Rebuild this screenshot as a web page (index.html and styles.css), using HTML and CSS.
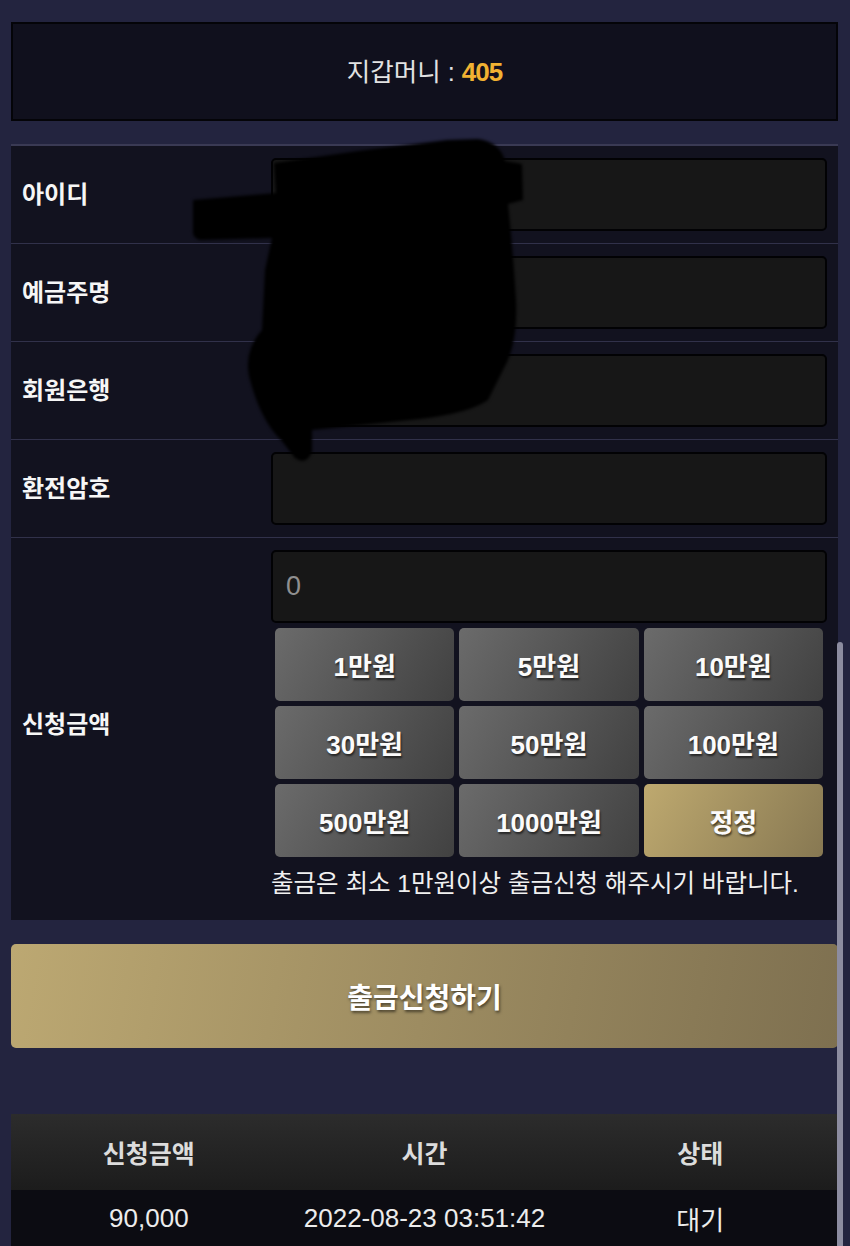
FILE: index.html
```html
<!DOCTYPE html>
<html lang="ko">
<head>
  <meta charset="UTF-8" />
  <title>출금신청</title>
  <link rel="stylesheet" href="styles.css">
</head>
<body>
  <div class="page">

    <div class="wallet">지갑머니 : <span class="wallet-amount">405</span></div>

    <div class="form">
      <div class="form-row">
        <div class="label">아이디</div>
        <div class="field"><input type="text" /></div>
      </div>
      <div class="form-row">
        <div class="label">예금주명</div>
        <div class="field"><input type="text" /></div>
      </div>
      <div class="form-row">
        <div class="label">회원은행</div>
        <div class="field"><input type="text" /></div>
      </div>
      <div class="form-row">
        <div class="label">환전암호</div>
        <div class="field"><input type="password" /></div>
      </div>
      <div class="form-row amount-row">
        <div class="label">신청금액</div>
        <div class="field">
          <input type="text" placeholder="0" />
          <div class="amount-grid">
            <button class="amount-btn">1만원</button>
            <button class="amount-btn">5만원</button>
            <button class="amount-btn">10만원</button>
            <button class="amount-btn">30만원</button>
            <button class="amount-btn">50만원</button>
            <button class="amount-btn">100만원</button>
            <button class="amount-btn">500만원</button>
            <button class="amount-btn">1000만원</button>
            <button class="amount-btn reset-btn">정정</button>
          </div>
          <p class="notice">출금은 최소 1만원이상 출금신청 해주시기 바랍니다.</p>
        </div>
      </div>
    </div>

    <button class="submit-btn">출금신청하기</button>

    <table class="history">
      <thead>
        <tr>
          <th>신청금액</th>
          <th>시간</th>
          <th>상태</th>
        </tr>
      </thead>
      <tbody>
        <tr>
          <td>90,000</td>
          <td>2022-08-23 03:51:42</td>
          <td>대기</td>
        </tr>
      </tbody>
    </table>

    <!-- masquage au feutre par-dessus les champs -->
    <svg class="redact" width="850" height="480" viewBox="0 0 850 480">
      <path d="M193,200 L276,193 L274,163 Q360,150 447,140 L478,139 Q500,142 505,161 L522,164 L523,200 L508,204 Q513,250 516,300 Q518,345 503,370 L488,400 Q470,413 420,419 L312,430 L312,452 Q306,466 295,458 L281,440 Q260,420 249,376 Q244,350 262,330 L265,270 L272,238 L200,240 Q192,238 193,230 Z" fill="#000" />
    </svg>
  </div>

  <div class="scroll-thumb"></div>
</body>
</html>
```

FILE: styles.css
```css
/* Page sombre bleu nuit */
html, body {
  margin: 0;
  background-color: #23243f;
}

body {
  font-family: "Liberation Sans", "Noto Sans CJK KR", sans-serif;
  color: #f2f2f2;
}

.page {
  position: relative;
  padding: 22px 12px 0 11px;
}

/* Bloc solde */
.wallet {
  height: 99px;
  box-sizing: border-box;
  border: 2px solid #040408;
  background-color: #10101d;
  display: flex;
  align-items: center;
  justify-content: center;
  font-size: 25.5px;
  line-height: 30px;
  color: #e2e2e2;
  white-space: pre;
}
.wallet-amount {
  color: #f1b232;
  font-weight: 700;
  font-size: 26px;
  letter-spacing: -1px;
}

/* Formulaire */
.form {
  margin-top: 23px;
  background-color: #12121f;
  border-top: 2px solid #3a3a54;
}

.form-row {
  display: grid;
  grid-template-columns: 260px 1fr;
  padding: 12px 11px 12px 0;
  border-bottom: 1px solid #31314a;
}
.form-row:last-child {
  border-bottom: none;
}

.label {
  align-self: center;
  padding-left: 11px;
  font-size: 24px;
  font-weight: 700;
  line-height: 30px;
  color: #f6f6f6;
}

.field input {
  display: block;
  width: 100%;
  height: 73px;
  box-sizing: border-box;
  border: 2px solid #020204;
  border-radius: 5px;
  background-color: #171717;
  color: #eee;
  padding: 0 13px;
  font-family: inherit;
  font-size: 27px;
}
.field input::placeholder {
  color: #8f8f8f;
}

/* Boutons montants */
.amount-row {
  padding-bottom: 21px;
}
.amount-grid {
  display: grid;
  grid-template-columns: repeat(3, 1fr);
  grid-auto-rows: 73px;
  gap: 5px;
  margin: 5px 4px 0 4px;
}

.amount-btn {
  border: none;
  border-radius: 5px;
  background: linear-gradient(120deg, #6b6b6b, #414141);
  color: #fbfbfb;
  font-family: inherit;
  font-size: 26px;
  font-weight: 700;
  text-shadow: 1px 2px 2px rgba(0, 0, 0, 0.6);
  cursor: pointer;
}
.reset-btn {
  background: linear-gradient(120deg, #bea96f, #877852);
}

.notice {
  margin: 12px 0 0 0;
  font-size: 24.5px;
  line-height: 30px;
  color: #f0f0f0;
  white-space: nowrap;
}

/* Bouton principal */
.submit-btn {
  display: block;
  width: 100%;
  height: 104px;
  margin-top: 24px;
  border: none;
  border-radius: 5px;
  background: linear-gradient(100deg, #bca872, #7e7050);
  color: #fff;
  font-family: inherit;
  font-size: 28px;
  font-weight: 700;
  text-shadow: 1px 2px 3px rgba(0, 0, 0, 0.55);
  cursor: pointer;
}

/* Historique */
.history {
  width: 100%;
  margin-top: 66px;
  border-collapse: collapse;
  table-layout: fixed;
}
.history th {
  height: 76px;
  padding: 0;
  background: linear-gradient(to bottom, #2c2c2c, #1c1c1c);
  font-size: 25px;
  font-weight: 700;
  color: #dcdcdc;
}
.history td {
  height: 56px;
  padding: 0;
  background-color: #0c0c12;
  text-align: center;
  font-size: 26px;
  color: #ececec;
}

.redact {
  position: absolute;
  left: 0;
  top: 0;
  filter: blur(1.5px);
}

/* Barre de défilement iOS */
.scroll-thumb {
  position: fixed;
  right: 7px;
  top: 642px;
  bottom: 0;
  width: 6px;
  border-radius: 3px 3px 0 0;
  background-color: #8c8ca0;
}
```
